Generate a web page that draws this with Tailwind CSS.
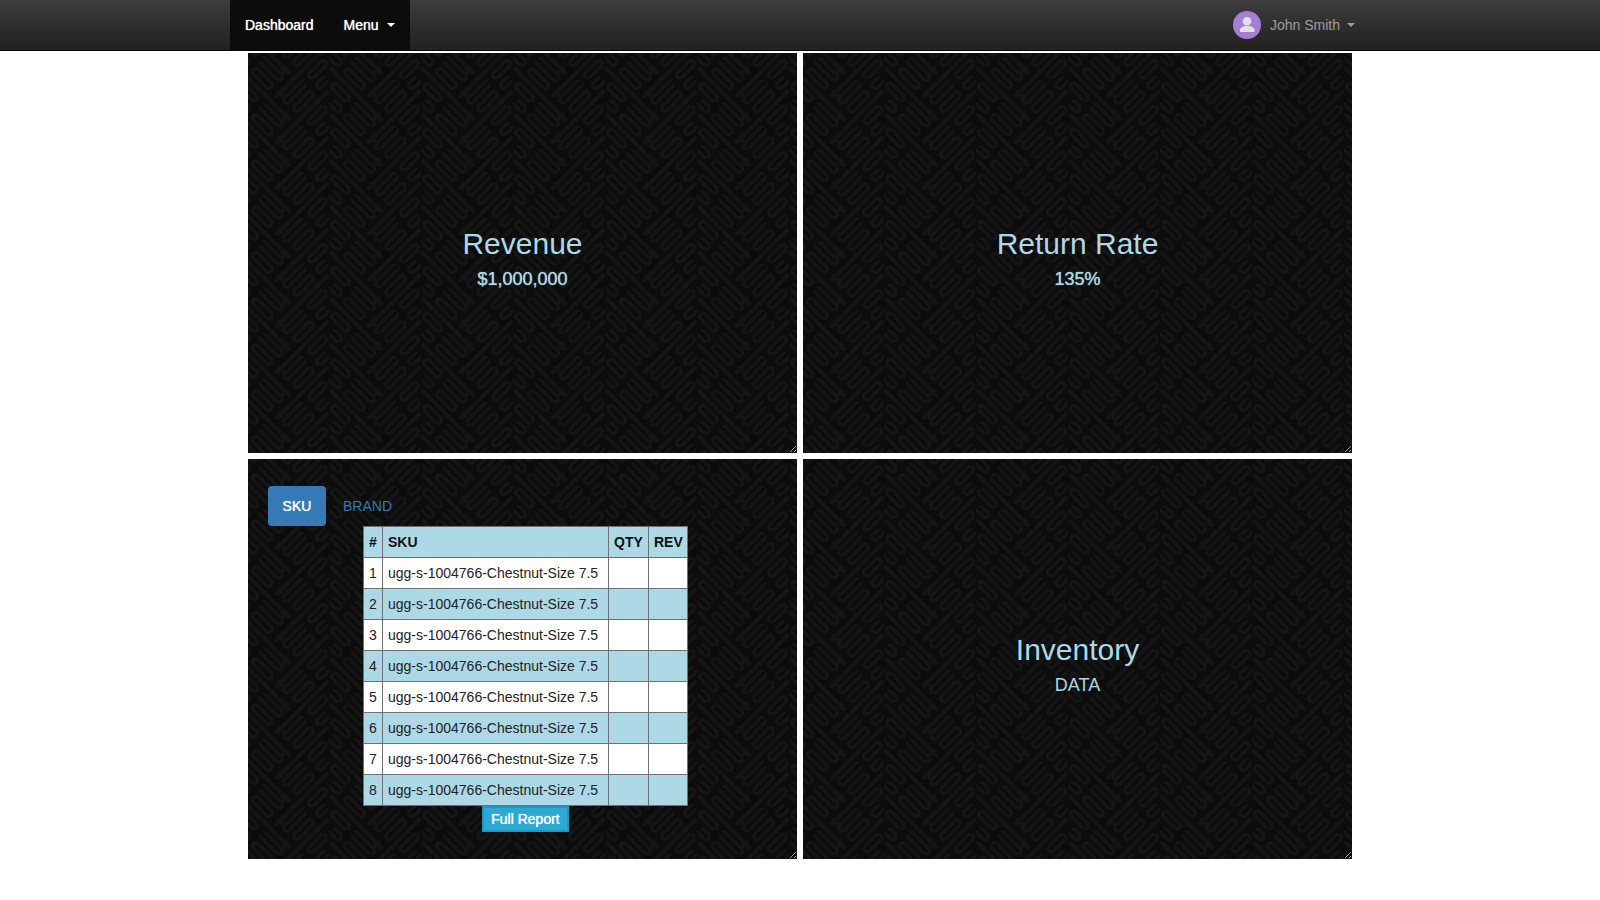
<!DOCTYPE html>
<html lang="en">
<head>
<meta charset="utf-8">
<meta name="viewport" content="width=device-width, initial-scale=1">
<title>Dashboard</title>
<script src="https://cdn.jsdelivr.net/npm/@tailwindcss/browser@4"></script>
</head>
<body class="min-h-screen bg-white font-['Liberation_Sans',Arial,sans-serif] text-[14px] leading-5 text-[#333]">

<!-- Shared background weave -->
<svg class="absolute size-0" aria-hidden="true">
  <defs>
    <g id="band" fill="none" stroke-linecap="round">
      <path stroke="#151515" stroke-width="4" d="M2 2L46 46"/>
      <path stroke="#151515" stroke-width="10" d="M6 19.800L17 30.800M27 40.800L42 55.800M5 37.200L9 41.200M19 51.200L32 64.200"/>
      <path stroke="#0b0b0b" stroke-width="3" d="M6 19.800L17 30.800M24 37.800L42 55.800M1 33.200L9 41.200M19 51.200L32 64.200"/>
      <path stroke="#151515" stroke-width="4" d="M42 70.900L45 73.900M40 75L45 70"/>
    </g>
    <g id="motif">
      <use href="#band"/>
      <use href="#band" transform="translate(92 23) scale(-1 1)"/>
    </g>
    <pattern id="weave" width="92" height="46" patternUnits="userSpaceOnUse" patternTransform="translate(81 14)">
      <rect width="92" height="46" fill="#0c0c0c"/>
      <use href="#motif" y="-92"/><use href="#motif" y="-46"/><use href="#motif"/>
    </pattern>
  </defs>
</svg>

<nav class="h-[51px] border-b border-[#080808] bg-linear-to-b from-[#3c3c3c] to-[#222]">
  <div class="mx-auto flex h-full max-w-[1140px] items-stretch justify-between">
    <div class="flex bg-[#0c0c0c] text-white">
      <a href="#" class="flex items-center px-[15px] text-shadow-[0_0_1px_#fff]">Dashboard</a>
      <button type="button" class="flex items-center gap-2 px-[15px] text-shadow-[0_0_1px_#fff]">Menu
        <svg class="h-1 w-2" viewBox="0 0 8 4" fill="currentColor" aria-hidden="true"><path d="M0 0h8L4 4z"/></svg>
      </button>
    </div>
    <button type="button" class="flex items-center px-[15px] text-[#9d9d9d]">
      <svg class="mr-[9px] size-7" viewBox="0 0 28 28" aria-hidden="true">
        <circle cx="14" cy="14" r="14" fill="#a57fd4"/>
        <circle cx="14" cy="10.300" r="4.300" fill="#e4dfe9"/>
        <path d="M7 21v-2c0-2.500 3-4 7-4s7.500 1.500 7.500 4v2z" fill="#e4dfe9"/>
      </svg>
      <span class="mr-[7px]">John Smith</span>
      <svg class="h-1 w-2" viewBox="0 0 8 4" fill="currentColor" aria-hidden="true"><path d="M0 0h8L4 4z"/></svg>
    </button>
  </div>
</nav>

<main class="mx-auto grid max-w-[1104px] grid-cols-2 gap-[6px] pt-[2px] text-[#add8e6]">
  <section class="relative flex min-h-[400px] resize items-center justify-center overflow-hidden bg-[#0c0c0c] text-center">
    <svg class="absolute inset-0 size-full" aria-hidden="true"><rect width="100%" height="100%" fill="url(#weave)"/></svg>
    <div class="relative pt-5 pb-[10px]">
      <h2 class="mb-2 text-[30px] leading-[34px]">Revenue</h2>
      <h4 class="text-[18px] leading-5 text-shadow-[0_0_1px_#add8e6]">$1,000,000</h4>
    </div>
  </section>

  <section class="relative flex min-h-[400px] resize items-center justify-center overflow-hidden bg-[#0c0c0c] text-center">
    <svg class="absolute inset-0 size-full" aria-hidden="true"><rect width="100%" height="100%" fill="url(#weave)"/></svg>
    <div class="relative pt-5 pb-[10px]">
      <h2 class="mb-2 text-[30px] leading-[34px]">Return Rate</h2>
      <h4 class="text-[18px] leading-5 text-shadow-[0_0_1px_#add8e6]">135%</h4>
    </div>
  </section>

  <section class="relative min-h-[400px] resize overflow-hidden bg-[#0c0c0c]">
    <svg class="absolute inset-0 size-full" aria-hidden="true"><rect width="100%" height="100%" fill="url(#weave)"/></svg>
    <div class="relative pt-[27px]">
      <div class="flex gap-[2px] pl-5" role="tablist">
        <button type="button" role="tab" aria-selected="true" class="w-[58px] rounded bg-[#337ab7] py-[10px] text-center text-white text-shadow-[0_0_1px_#fff]">SKU</button>
        <button type="button" role="tab" aria-selected="false" class="rounded px-[15px] py-[10px] text-[#337ab7]">BRAND</button>
      </div>
      <div class="flex flex-col items-center pl-[6px]">
        <table class="w-[325px] table-fixed border-collapse bg-white text-left text-[#222] [&_td]:border [&_td]:border-[#707070] [&_td]:px-[5px] [&_td]:py-[5px] [&_th]:border [&_th]:border-[#707070] [&_th]:px-[5px] [&_th]:py-[5px] [&_tr:nth-child(even)]:bg-[#add8e6]">
          <colgroup><col class="w-[19px]"><col><col class="w-[40px]"><col class="w-[39px]"></colgroup>
          <thead class="bg-[#add8e6] text-[#111]"><tr><th scope="col">#</th><th scope="col">SKU</th><th scope="col">QTY</th><th scope="col">REV</th></tr></thead>
          <tbody>
            <tr><td>1</td><td>ugg-s-1004766-Chestnut-Size 7.5</td><td></td><td></td></tr>
            <tr><td>2</td><td>ugg-s-1004766-Chestnut-Size 7.5</td><td></td><td></td></tr>
            <tr><td>3</td><td>ugg-s-1004766-Chestnut-Size 7.5</td><td></td><td></td></tr>
            <tr><td>4</td><td>ugg-s-1004766-Chestnut-Size 7.5</td><td></td><td></td></tr>
            <tr><td>5</td><td>ugg-s-1004766-Chestnut-Size 7.5</td><td></td><td></td></tr>
            <tr><td>6</td><td>ugg-s-1004766-Chestnut-Size 7.5</td><td></td><td></td></tr>
            <tr><td>7</td><td>ugg-s-1004766-Chestnut-Size 7.5</td><td></td><td></td></tr>
            <tr><td>8</td><td>ugg-s-1004766-Chestnut-Size 7.5</td><td></td><td></td></tr>
          </tbody>
        </table>
        <button type="button" class="h-[26px] border-2 border-[#2496bb] bg-[#2ba9d3] px-[7px] leading-5 text-white text-shadow-[0_0_1px_#fff]">Full Report</button>
      </div>
    </div>
  </section>

  <section class="relative flex min-h-[400px] resize items-center justify-center overflow-hidden bg-[#0c0c0c] text-center">
    <svg class="absolute inset-0 size-full" aria-hidden="true"><rect width="100%" height="100%" fill="url(#weave)"/></svg>
    <div class="relative pt-5 pb-[10px]">
      <h2 class="mb-2 text-[30px] leading-[34px]">Inventory</h2>
      <h4 class="text-[18px] leading-5">DATA</h4>
    </div>
  </section>
</main>
</body>
</html>
